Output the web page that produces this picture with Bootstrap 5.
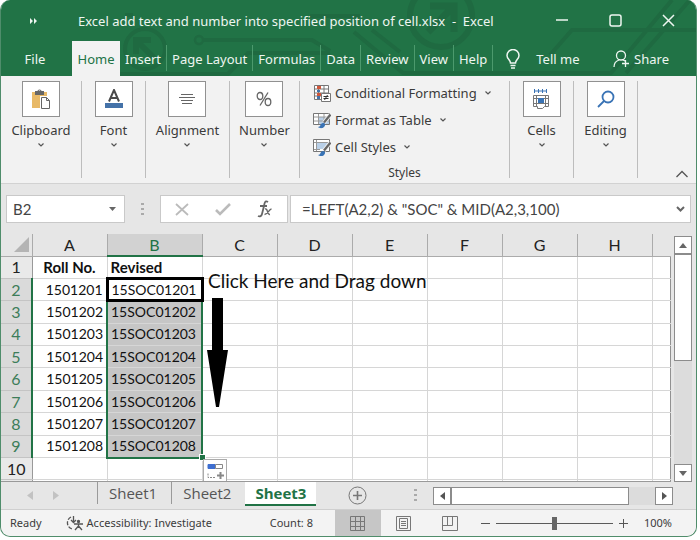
<!DOCTYPE html>
<html lang="en">
<head>
<meta charset="utf-8">
<meta name="viewport" content="width=device-width, initial-scale=1">
<title>Excel add text and number into specified position of cell.xlsx - Excel</title>
<link rel="stylesheet" href="https://cdn.jsdelivr.net/npm/bootstrap@5.3.0/dist/css/bootstrap.min.css">
<style>
:root{--ui:"Noto Sans","Open Sans",sans-serif;--cal:Lato,"Open Sans",sans-serif;--xl:#217346}
body{font-family:var(--ui);background:#fff;color:#3b3b3b;font-size:13px;line-height:20px;padding:0 3px 3px 0}
button{font:inherit;color:inherit;background:none;border:0;padding:0}
svg{display:block;flex:none}
.window{background:#e6e6e6;border:1px solid #4f8d6b;border-top:0;border-radius:10px;height:calc(100vh - 3px);min-height:440px}
.top{background:var(--xl);color:#eef6f1;margin:0 -1px}
.circuit{inset:0;width:100%;height:100%}
.titlebar{height:41px;padding-left:30px;padding-right:22px}
.caption-text{margin-left:40px}
.winbtns{gap:40px}
.menu{height:35px;padding-left:18px;padding-right:28px}
.menu button{height:35px;padding:0 5px;white-space:nowrap}
.menu .file-tab{width:34px;padding:0;margin-right:20px}
.menu .active-tab{background:#f2f2f2;color:var(--xl);padding:0;width:48px}
.menu .sep{border-right:1px solid #4c9a6d;height:26px;margin:4px 0 5px}
.ribbon{background:#f2f2f2;height:108px;padding-top:5px;padding-bottom:5px;border-bottom:1px solid #d2d2d2}
.group{border-right:1px solid #bdbdbd}
.group button{line-height:18px}
.w64{width:64px}.w70{width:70px}.w81{width:81px}.w84{width:84px}.w210{width:210px}
.tile{width:38px;height:36px;border:1px solid #919191;background:#fff;margin-bottom:4px}
.styles-list{gap:7px;padding-left:13px;padding-top:2px}
.styles-list button{gap:4px;height:20px}
.small-label{font-size:12px;line-height:10px}
.fbar{height:50px;padding:11px 5px 11px 5px;font-family:var(--cal)}
.box{background:#fff;border:1px solid #c9c9c9;height:28px}
.namebox{width:119px;padding:0 8px 0 6px}
.fxbox{width:128px;padding:0 14px}
.field{border:0;background:none;outline:0;font:15px/20px var(--cal);color:#444;padding:0;min-width:0}
.formula{margin-left:2px;padding:0 5px 0 11px}
.sheetwrap{min-height:0}
.cells{table-layout:fixed;width:100%;height:249px;border-collapse:collapse;font:14px/18px var(--cal);color:#111}
.cells th,.cells td{padding:0 3px 0 3px;border-right:1px solid #d6d6d6;border-bottom:1px solid #d6d6d6;font-weight:400;white-space:nowrap;overflow:hidden;height:22px}
.cells thead th{background:#e6e6e6;border-color:#ababab;text-align:center;font-size:16px;color:#222}
.cells tbody th{background:#e9e9e9;border-color:#c4c4c4 #999 #c4c4c4 #c4c4c4;text-align:center;font-size:16px;color:#222;padding:0}
.cells .last-col{border-right:1px solid #919191}
.cells thead .last-col{border-right:0}
.cells td{background:#fff;text-align:right}
.cells .txt{text-align:left}
.cells .fw-bold{font-size:15px}
.cells thead .on{background:#d2d2d2;color:var(--xl);border-bottom:2px solid var(--xl)}
.cells tbody th.on{background:#dadada;color:#3c7d59;border-right:2px solid var(--xl)}
.cells td.sel{background:#c6c6c6;border-left:2px solid var(--xl);border-right:2px solid var(--xl)}
.cells td.sel-end{border-bottom:2px solid var(--xl)}
.cells td.cursor{background:#fff;border:3px solid #000}
.cells .stub th,.cells .stub td{height:3px;line-height:0;font-size:0;border-bottom:0}
.grid-pane{border-bottom:1px solid #999}
.note{left:207px;top:36px;font:19px/22px var(--cal);color:#111}
.arrow{left:206px;top:64px}
.handle{left:198px;top:220px;width:5px;height:5px;background:var(--xl);border:1px solid #fff;box-sizing:content-box}
.fillopt{left:202px;top:225px;width:24px;height:23px;background:#fff;border:1px solid #ababab}
.vscroll{width:18px;margin:2px 4px 0 3px;background:#dcdcdc}
.sbtn{background:#fff;border:1px solid #8c8c8c;width:18px;height:18px}
.thumb{background:#fff;border:1px solid #8c8c8c}
.vscroll .thumb{height:107px}
.tabsrow{height:27px;font-family:"Open Sans",sans-serif;font-size:15px;color:#555;padding-right:23px}
.tabsrow .sheet{padding:0 6px 0 11px;height:22px;line-height:22px;border-left:1px solid #9a9a9a}
.tabsrow .sheet-on{background:#fff;color:var(--xl);font-weight:700;border-bottom:2px solid var(--xl);padding:0 10px;height:24px;line-height:22px}
.navarr{gap:20px;width:96px;padding-left:26px}
.hscroll{width:240px;height:18px;background:#dcdcdc}
.hscroll .thumb{width:178px}
.status{background:#f3f3f3;height:27px;font-size:11px;border-top:1px solid #cfcfcf;border-radius:0 0 9px 9px;padding:0 24px 0 9px}
.count{margin-right:22px}
.view{width:46px}
.view-on{background:#c6c6c6}
.zoomer{appearance:none;-webkit-appearance:none;width:117px;height:14px;background:linear-gradient(#5a5a5a,#5a5a5a) center/100% 1px no-repeat;margin:0 6px}
.zoomer::-webkit-slider-thumb{-webkit-appearance:none;width:5px;height:13px;background:#666}
</style>
<script src="https://cdn.jsdelivr.net/npm/bootstrap@5.3.0/dist/js/bootstrap.bundle.min.js"></script>
</head>
<body>
<div class="window d-flex flex-column overflow-hidden">
  <header class="top position-relative">
    <svg class="circuit position-absolute" viewBox="0 0 697 76" preserveAspectRatio="none" fill="none" stroke="#1f6a41" stroke-width="4" aria-hidden="true">
      <circle cx="145" cy="49" r="20"/><path d="M154 58 138 42M136 54V40h15" stroke-width="6"/>
      <circle cx="199" cy="40" r="4" stroke-width="2.500"/><path d="M204 40H312l18 11M120 74H228l20-21H330"/>
      <circle cx="441" cy="16" r="31" stroke-width="6"/><path d="M428 32 452 8M430 6h24v26" stroke-width="7"/>
      <path d="M354 32 403 73H611L672 0M372 30 400 52M550 55 572 30H697M626 73 690 0M125 15h8M310 16h50"/>
    </svg>
    <div class="titlebar position-relative d-flex align-items-center">
      <svg width="8" height="6" viewBox="0 0 8 6" fill="#eef6f1"><path d="M0 0l3 3-3 3zM4 0l3 3-3 3z"/></svg>
      <span class="caption-text flex-grow-1 text-nowrap">Excel add text and number into specified position of cell.xlsx&nbsp; -&nbsp; Excel</span>
      <div class="winbtns d-flex align-items-center">
        <button aria-label="Minimize"><svg width="13" height="13" stroke="#eef6f1" fill="none" stroke-width="1.500"><path d="M0 6h12"/></svg></button>
        <button aria-label="Maximize"><svg width="13" height="13" stroke="#eef6f1" fill="none" stroke-width="1.500"><rect x="1" y="1" width="11" height="11" rx="2"/></svg></button>
        <button aria-label="Close"><svg width="13" height="13" stroke="#eef6f1" fill="none" stroke-width="1.500"><path d="M1 1l11 11M12 1 1 12"/></svg></button>
      </div>
    </div>
    <nav class="menu position-relative d-flex align-items-center">
      <button class="file-tab">File</button>
      <button class="active-tab">Home</button>
      <button>Insert</button><span class="sep"></span>
      <button>Page Layout</button><span class="sep"></span>
      <button>Formulas</button><span class="sep"></span>
      <button>Data</button><span class="sep"></span>
      <button>Review</button><span class="sep"></span>
      <button>View</button><span class="sep"></span>
      <button>Help</button><span class="sep"></span>
      <button class="d-flex align-items-center gap-3 ms-2"><svg width="14" height="20" viewBox="0 0 14 20" fill="none" stroke="#eef6f1" stroke-width="1.500"><path d="M4.500 14c0-3-3.500-4-3.500-7.500a6 6 0 0 1 12 0C13 10 9.500 11 9.500 14zM4.500 16.500h5M5 19h4"/></svg>Tell me</button>
      <button class="d-flex align-items-center gap-1 ms-auto pe-0"><svg width="17" height="18" viewBox="0 0 17 18" fill="none" stroke="#eef6f1" stroke-width="1.300"><circle cx="8" cy="5.500" r="4.500"/><path d="M1 17c0-4 2-6 5-7M10 10l2 1M12.500 10v7M9 13.500h7"/></svg>Share</button>
    </nav>
  </header>

  <section class="ribbon d-flex flex-shrink-0">
    <div class="group w81 d-flex justify-content-center"><button class="d-flex flex-column align-items-center">
      <span class="tile d-flex align-items-center justify-content-center"><svg width="20" height="21" viewBox="0 0 20 21"><path d="M1 3h15v16H1z" fill="#e8b967"/><path d="M4 2h9v4H4z" fill="#666"/><path d="M6.500 3a2 2 0 0 1 4 0" fill="none" stroke="#666"/><path d="M9 7h8v13H9z" fill="#fff"/><path d="M10.500 8.500h5l3 3v8h-8z" fill="#fff" stroke="#666"/><path d="M15.500 8.500v3h3" fill="none" stroke="#666"/></svg></span>
      Clipboard<svg class="mt-1" width="6" height="4" fill="none" stroke="#555" stroke-width="1.200"><path d="M.5.5 3 3 5.500.5"/></svg></button></div>
    <div class="group w64 d-flex justify-content-center"><button class="d-flex flex-column align-items-center">
      <span class="tile d-flex align-items-center justify-content-center"><svg width="20" height="20" viewBox="0 0 20 20"><path d="M5 12.500 10 1l5 11.500M7 9h6" fill="none" stroke="#4a4a4a" stroke-width="2"/><path d="M1 14h18v5H1z" fill="#4472a8"/></svg></span>
      Font<svg class="mt-1" width="6" height="4" fill="none" stroke="#555" stroke-width="1.200"><path d="M.5.5 3 3 5.500.5"/></svg></button></div>
    <div class="group w84 d-flex justify-content-center"><button class="d-flex flex-column align-items-center">
      <span class="tile d-flex align-items-center justify-content-center"><svg width="16" height="12" stroke="#666"><path d="M2 1.500h12M0 4.500h16M2 7.500h12M3 10.500h10"/></svg></span>
      Alignment<svg class="mt-1" width="6" height="4" fill="none" stroke="#555" stroke-width="1.200"><path d="M.5.5 3 3 5.500.5"/></svg></button></div>
    <div class="group w70 d-flex justify-content-center"><button class="d-flex flex-column align-items-center">
      <span class="tile d-flex align-items-center justify-content-center"><svg width="16" height="16" fill="none" stroke="#666" stroke-width="1.300"><ellipse cx="4" cy="5" rx="2.800" ry="3.500"/><ellipse cx="12" cy="11" rx="2.800" ry="3.500"/><path d="M12 1.500 4 14.500"/></svg></span>
      Number<svg class="mt-1" width="6" height="4" fill="none" stroke="#555" stroke-width="1.200"><path d="M.5.5 3 3 5.500.5"/></svg></button></div>
    <div class="group w210 d-flex flex-column">
      <div class="styles-list d-flex flex-column align-items-start">
        <button class="d-flex align-items-center"><svg width="18" height="18" viewBox="0 0 18 18"><path d="M1.500 1.500h14v14h-14zM1 5h15M1 9h15M1 12h8M5.500 1v14M11 1v8" fill="#fff" stroke="#777"/><path d="M4 2h4v3H4zM4 9h4v3H4z" fill="#d0573b"/><path d="M4 6h3v2H4zM4 12h3v3H4z" fill="#4472a8"/><path d="M8.500 9.500h9v8h-9z" fill="#fff" stroke="#777"/><path d="M10.500 12.500h5M10.500 14.500h5M14.500 11l-3 5" stroke="#333"/></svg>Conditional Formatting<svg class="ms-1" width="6" height="4" fill="none" stroke="#555" stroke-width="1.200"><path d="M.5.5 3 3 5.500.5"/></svg></button>
        <button class="d-flex align-items-center"><svg width="18" height="18" viewBox="0 0 18 18"><path d="M.5 2.500h16v11H.5z" fill="#fff" stroke="#777"/><path d="M5 6h11v7H5z" fill="#b9d0e8"/><path d="M1 6h15M1 10h15M5.500 3v10M11 3v10" stroke="#999"/><path d="M17.500 3.500 11 11.500" stroke="#f2f2f2" stroke-width="4"/><path d="M17.500 3.500 11 11.500" stroke="#666" stroke-width="2.200"/><path d="M5 16c3 0 2-4 5-4 2 0 3 2 1 4s-5 1-6 0z" fill="#3973b5"/></svg>Format as Table<svg class="ms-1" width="6" height="4" fill="none" stroke="#555" stroke-width="1.200"><path d="M.5.5 3 3 5.500.5"/></svg></button>
        <button class="d-flex align-items-center"><svg width="18" height="18" viewBox="0 0 18 18"><path d="M.5 1.500h16v12H.5z" fill="#fff" stroke="#777"/><path d="M4 5h11v6H4z" fill="#b9d0e8"/><path d="M1 4.500h15M1 11.500h6M3.500 2v11" stroke="#999"/><path d="M17.500 4.500 11 12.500" stroke="#f2f2f2" stroke-width="4"/><path d="M17.500 4.500 11 12.500" stroke="#666" stroke-width="2.200"/><path d="M5 17c3 0 2-4 5-4 2 0 3 2 1 4s-5 1-6 0z" fill="#3973b5"/></svg>Cell Styles<svg class="ms-1" width="6" height="4" fill="none" stroke="#555" stroke-width="1.200"><path d="M.5.5 3 3 5.500.5"/></svg></button>
      </div>
      <div class="small-label text-center mt-auto">Styles</div>
    </div>
    <div class="group w64 d-flex justify-content-center"><button class="d-flex flex-column align-items-center">
      <span class="tile d-flex align-items-center justify-content-center"><svg width="17" height="20" viewBox="0 0 17 20" fill="none" stroke="#777"><path d="M1.500 0v4M13.500 0v4M2 2h11M5.500 0v4M9.500 0v4" stroke="#3973b5"/><path d="M.5 6.500h15v11h-4l-2 2h-5v-2h-4zM.5 9.500h15M.5 14.500h15M3.500 6v12M12.500 6v12"/><path d="M5 9h6v5H5z" fill="#3973b5" stroke="none"/></svg></span>
      Cells<svg class="mt-1" width="6" height="4" fill="none" stroke="#555" stroke-width="1.200"><path d="M.5.5 3 3 5.500.5"/></svg></button></div>
    <div class="group w64 d-flex justify-content-center"><button class="d-flex flex-column align-items-center">
      <span class="tile d-flex align-items-center justify-content-center"><svg width="18" height="18" fill="none" stroke="#3973b5" stroke-width="1.800"><circle cx="11" cy="7" r="5.500"/><path d="M7 11 1 17"/></svg></span>
      Editing<svg class="mt-1" width="6" height="4" fill="none" stroke="#555" stroke-width="1.200"><path d="M.5.5 3 3 5.500.5"/></svg></button></div>
    <button class="ms-auto align-self-end me-2" aria-label="Collapse ribbon"><svg width="12" height="8" fill="none" stroke="#555" stroke-width="1.300"><path d="M.5 7 6 1.500 11.500 7"/></svg></button>
  </section>

  <section class="fbar d-flex flex-shrink-0">
    <div class="box namebox d-flex align-items-center"><input class="field w-100" aria-label="Name box" value="B2"><svg width="7" height="4" fill="#666"><path d="M0 0h7L3.500 4z"/></svg></div>
    <div class="d-flex align-items-center justify-content-center flex-shrink-0 w-auto px-3"><svg width="3" height="13" fill="#aaa"><path d="M0 0h3v2H0zM0 5h3v2H0zM0 10h3v2H0z"/></svg></div>
    <div class="box fxbox d-flex align-items-center justify-content-between flex-shrink-0">
      <button aria-label="Cancel"><svg width="14" height="13" stroke="#bbb" stroke-width="1.800" fill="none"><path d="M1 1l12 11M13 1 1 12"/></svg></button>
      <button aria-label="Enter"><svg width="16" height="13" stroke="#bbb" stroke-width="2.600" fill="none"><path d="M1 7l4 4L15 1"/></svg></button>
      <button aria-label="Insert function"><svg width="16" height="18" fill="none" stroke="#666" stroke-width="1.800"><path d="M11 2C8 0 7.500 3 7 6L5 14c-.5 2-2 3-4 2M3 6h7"/><path d="M8 9c3-1 2 6 5 5.500M14.500 9C12 9 11 14.500 7.500 14.500" stroke-width="1.400"/></svg></button>
    </div>
    <div class="box formula flex-grow-1 d-flex align-items-center"><input class="field flex-grow-1" aria-label="Formula bar" value='=LEFT(A2,2) &amp; "SOC" &amp; MID(A2,3,100)'><svg width="9" height="7" fill="none" stroke="#666" stroke-width="2"><path d="M1 1l3.500 3.500L8 1"/></svg></div>
  </section>

  <main class="sheetwrap d-flex flex-grow-1">
    <div class="grid-pane position-relative flex-grow-1 overflow-hidden">
      <table class="cells">
        <colgroup><col style="width:31px"><col style="width:75px"><col style="width:95px"><col style="width:75px"><col style="width:75px"><col style="width:75px"><col style="width:75px"><col style="width:75px"><col style="width:75px"><col></colgroup>
        <thead><tr><th aria-label="Select all"><svg class="ms-auto" width="15" height="15" fill="#b4b4b4"><path d="M15 0v15H0z"/></svg></th><th>A</th><th class="on">B</th><th>C</th><th>D</th><th>E</th><th>F</th><th>G</th><th>H</th><th class="last-col"></th></tr></thead>
        <tbody>
          <tr><th>1</th><td class="fw-bold text-center">Roll No.</td><td class="txt fw-bold">Revised</td><td></td><td></td><td></td><td></td><td></td><td></td><td class="last-col"></td></tr>
          <tr><th class="on">2</th><td>1501201</td><td class="txt cursor">15SOC01201</td><td></td><td></td><td></td><td></td><td></td><td></td><td class="last-col"></td></tr>
          <tr><th class="on">3</th><td>1501202</td><td class="txt sel">15SOC01202</td><td></td><td></td><td></td><td></td><td></td><td></td><td class="last-col"></td></tr>
          <tr><th class="on">4</th><td>1501203</td><td class="txt sel">15SOC01203</td><td></td><td></td><td></td><td></td><td></td><td></td><td class="last-col"></td></tr>
          <tr><th class="on">5</th><td>1501204</td><td class="txt sel">15SOC01204</td><td></td><td></td><td></td><td></td><td></td><td></td><td class="last-col"></td></tr>
          <tr><th class="on">6</th><td>1501205</td><td class="txt sel">15SOC01205</td><td></td><td></td><td></td><td></td><td></td><td></td><td class="last-col"></td></tr>
          <tr><th class="on">7</th><td>1501206</td><td class="txt sel">15SOC01206</td><td></td><td></td><td></td><td></td><td></td><td></td><td class="last-col"></td></tr>
          <tr><th class="on">8</th><td>1501207</td><td class="txt sel">15SOC01207</td><td></td><td></td><td></td><td></td><td></td><td></td><td class="last-col"></td></tr>
          <tr><th class="on">9</th><td>1501208</td><td class="txt sel sel-end">15SOC01208</td><td></td><td></td><td></td><td></td><td></td><td></td><td class="last-col"></td></tr>
          <tr><th>10</th><td></td><td></td><td></td><td></td><td></td><td></td><td></td><td></td><td class="last-col"></td></tr>
          <tr class="stub"><th></th><td></td><td></td><td></td><td></td><td></td><td></td><td></td><td></td><td class="last-col"></td></tr>
        </tbody>
      </table>
      <div class="note position-absolute text-nowrap">Click Here and Drag down</div>
      <svg class="arrow position-absolute" width="21" height="109"><path d="M5 0h11v52h5l-9 57h-3L0 52h5z"/></svg>
      <span class="handle position-absolute"></span>
      <button class="fillopt position-absolute d-flex align-items-center justify-content-center" aria-label="Auto fill options"><svg width="17" height="17" fill="none" stroke="#888"><path d="M1 2.500h7v4H1z" fill="#3f6fd0" stroke="#3f6fd0"/><path d="M8.500 2.500h7v4h-7z"/><path d="M1 11.500v4h8" stroke-dasharray="2 1"/><path d="M13.500 10v7M10 13.500h7" stroke-width="2"/></svg></button>
    </div>
    <div class="vscroll d-flex flex-column">
      <button class="sbtn d-flex align-items-center justify-content-center" aria-label="Scroll up"><svg width="8" height="5" fill="#666"><path d="M0 5h8L4 0z"/></svg></button>
      <div class="thumb"></div>
      <button class="sbtn mt-auto d-flex align-items-center justify-content-center" aria-label="Scroll down"><svg width="8" height="5" fill="#666"><path d="M0 0h8L4 5z"/></svg></button>
    </div>
  </main>

  <nav class="tabsrow d-flex align-items-start flex-shrink-0">
    <div class="navarr d-flex align-self-center"><svg width="6" height="9" fill="#c2c2c2"><path d="M6 0v9L0 4.500z"/></svg><svg width="6" height="9" fill="#c2c2c2"><path d="M0 0v9l6-4.500z"/></svg></div>
    <button class="sheet">Sheet1</button>
    <button class="sheet ms-2">Sheet2</button>
    <button class="sheet-on ms-2">Sheet3</button>
    <button class="align-self-center ms-4 ps-2" aria-label="New sheet"><svg width="19" height="19" fill="none" stroke="#777"><circle cx="9.500" cy="9.500" r="8.500"/><path d="M5 9.500h9M9.500 5v9" stroke-width="1.600"/></svg></button>
    <svg class="align-self-center ms-auto me-3" width="3" height="13" fill="#aaa"><path d="M0 0h3v2H0zM0 5h3v2H0zM0 10h3v2H0z"/></svg>
    <div class="hscroll d-flex align-self-center">
      <button class="sbtn d-flex align-items-center justify-content-center" aria-label="Scroll left"><svg width="5" height="8" fill="#555"><path d="M5 0v8L0 4z"/></svg></button>
      <div class="thumb"></div>
      <button class="sbtn ms-auto d-flex align-items-center justify-content-center" aria-label="Scroll right"><svg width="5" height="8" fill="#555"><path d="M0 0v8l5-4z"/></svg></button>
    </div>
  </nav>

  <footer class="status d-flex align-items-center flex-shrink-0">
    <span>Ready</span>
    <button class="d-flex align-items-center gap-1 ms-4 text-nowrap"><svg width="17" height="16" fill="none" stroke="#555" stroke-width="1.300"><path d="M5 2A6.500 6.500 0 0 0 6 14" stroke-dasharray="4 1.500"/><path d="M7.500 1v6M5 5l2.500 2.500L10 5M8 9h9M12.500 9v2M12.500 11 9 15M12.500 11l3.500 4"/><circle cx="12.500" cy="6.500" r="1" fill="#555"/></svg>Accessibility: Investigate</button>
    <span class="count ms-auto">Count: 8</span>
    <button class="view view-on align-self-stretch d-flex align-items-center justify-content-center" aria-label="Normal view"><svg width="15" height="15" fill="none" stroke="#777"><path d="M.5.500h14v14H.5zM5.500 0v15M10.500 0v15M0 5.500h15M0 10.500h15"/></svg></button>
    <button class="view d-flex justify-content-center" aria-label="Page layout view"><svg width="15" height="15" fill="none" stroke="#777"><path d="M.5.500h14v14H.5zM3.500 2.500h8v10h-8zM5 5.500h5M5 7.500h5M5 9.500h5"/></svg></button>
    <button class="view d-flex justify-content-center" aria-label="Page break preview"><svg width="16" height="15" fill="none" stroke="#777"><path d="M.5.500h15v14H.5zM.5 9.500h10V.5M5.500.500v9"/></svg></button>
    <button class="ms-2" aria-label="Zoom out"><svg width="9" height="9" stroke="#555"><path d="M0 4.500h9"/></svg></button>
    <input class="zoomer" type="range" min="0" max="100" value="50" aria-label="Zoom">
    <button aria-label="Zoom in"><svg width="9" height="9" stroke="#555"><path d="M0 4.500h9M4.500 0v9"/></svg></button>
    <span class="ms-3">100%</span>
  </footer>
</div>
</body>
</html>
